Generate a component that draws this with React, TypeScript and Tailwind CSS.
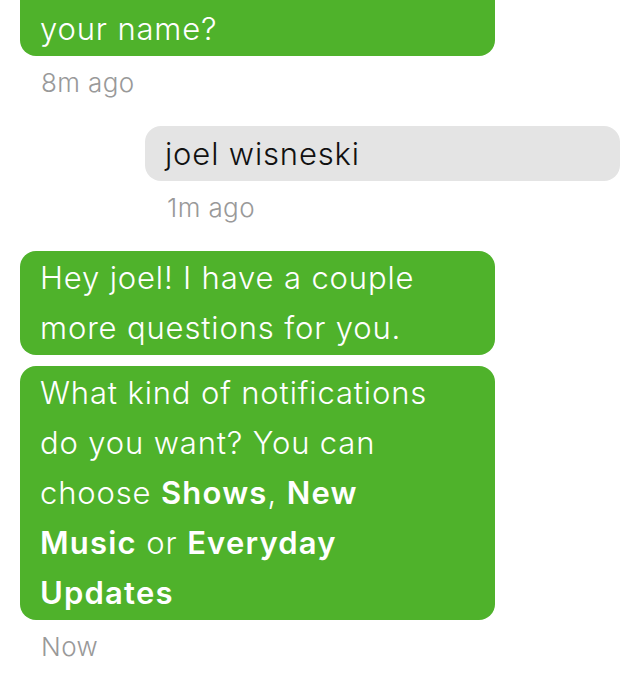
import React from 'react';

type Msg = {
  from: 'bot' | 'user';
  lines: React.ReactNode[];
  time?: string;
  cut?: boolean;
};

const MESSAGES: Msg[] = [
  { from: 'bot', lines: ['your name?'], time: '8m ago', cut: true },
  { from: 'user', lines: ['joel wisneski'], time: '1m ago' },
  { from: 'bot', lines: ['Hey joel! I have a couple', 'more questions for you.'] },
  {
    from: 'bot',
    lines: [
      'What kind of notifications',
      'do you want? You can',
      <>
        choose <b className="font-semibold tracking-[1.2px]">Shows</b>, <b className="font-semibold tracking-[1.2px]">New</b>
      </>,
      <>
        <b className="font-semibold tracking-[1.2px]">Music</b> or <b className="font-semibold tracking-[1.2px]">Everyday</b>
      </>,
      <b className="font-semibold tracking-[1.2px]">Updates</b>,
    ],
    time: 'Now',
  },
];

const Bubble: React.FC<{ msg: Msg }> = ({ msg }) => {
  const bot = msg.from === 'bot';
  return (
    <div className={bot ? 'flex justify-start' : 'flex justify-end'}>
      <div
        className={
          (bot ? 'bg-[#4fb22b] text-white' : 'bg-[#e4e4e4] text-[#111]') +
          ' w-[475px] px-[20px] text-[31px] leading-[50px] tracking-[0.85px] font-light ' +
          (msg.cut
            ? 'rounded-b-[16px] pt-[4px] pb-[2px]'
            : bot
              ? 'rounded-[16px] py-[2px]'
              : 'rounded-[16px] pt-[3px] pb-[2px]')
        }
      >
        {msg.lines.map((l, i) => (
          <div key={i} className="whitespace-nowrap">
            {l}
          </div>
        ))}
      </div>
    </div>
  );
};

export default function App() {
  return (
    <div
      className="min-h-[692px] bg-white px-[20px] pb-[20px]"
      style={{ fontFamily: 'Inter, Roboto, "Liberation Sans", sans-serif' }}
    >
      <div className="flex flex-col gap-[11px]">
        {MESSAGES.map((m, i) => (
          <div key={i}>
            <Bubble msg={m} />
            {m.time && (
              <div
                className={
                  'mt-[13px] mb-[18px] h-[28px] text-[26px] leading-[28px] tracking-[0.4px] font-light text-[#999] ' +
                  (m.from === 'user' ? 'pl-[147px]' : 'pl-[21px]')
                }
              >
                {m.time}
              </div>
            )}
          </div>
        ))}
      </div>
    </div>
  );
}
